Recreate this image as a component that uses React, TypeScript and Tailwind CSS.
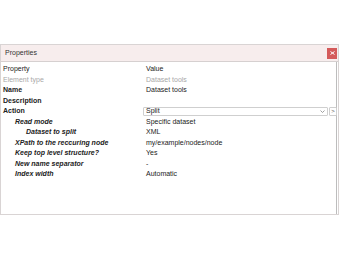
import React from 'react'

type Row = {
    label: string;
    value?: string;
    indent?: number;
    kind?: 'plain' | 'muted' | 'bold' | 'sub';
    select?: boolean;
}

const rows: Row[] = [
    { label: 'Property', value: 'Value', kind: 'plain' },
    { label: 'Element type', value: 'Dataset tools', kind: 'muted' },
    { label: 'Name', value: 'Dataset tools', kind: 'bold' },
    { label: 'Description', value: '', kind: 'bold' },
    { label: 'Action', value: 'Split', kind: 'bold', select: true },
    { label: 'Read mode', value: 'Specific dataset', kind: 'sub', indent: 1 },
    { label: 'Dataset to split', value: 'XML', kind: 'sub', indent: 2 },
    { label: 'XPath to the reccuring node', value: 'my/example/nodes/node', kind: 'sub', indent: 1 },
    { label: 'Keep top level structure?', value: 'Yes', kind: 'sub', indent: 1 },
    { label: 'New name separator', value: '-', kind: 'sub', indent: 1 },
    { label: 'Index width', value: 'Automatic', kind: 'sub', indent: 1 },
]

const App = () => {
    return (
        <div className="w-[340px] h-[260px] bg-white pt-[44px] font-['Liberation_Sans',Arial,sans-serif] text-[7px] text-[#222]">
            <div className="w-[339px] h-[171px] border border-[#d9d4d4] flex flex-col">
                <div className="h-[17px] bg-[#f7eded] border-b border-[#d6d0d0] flex items-center justify-between pl-[4px] pr-[1px]">
                    <span className="text-[#333]">Properties</span>
                    <div className="w-[10px] h-[11px] bg-[#d45a5a] flex items-center justify-center">
                        <svg width="5" height="4" viewBox="0 0 5 4">
                            <path d="M0.5 0.5 L4.5 3.5 M4.5 0.5 L0.5 3.5" stroke="#fff" strokeWidth="1" />
                        </svg>
                    </div>
                </div>
                <div className="flex-1 pt-[2px] border-r border-[#bdbdbd] mr-[1px]">
                    {rows.map((r) => (
                        <div key={r.label} className="h-[10.5px] flex items-center">
                            <div
                                className={
                                    'w-[142px] shrink-0 pl-[2px] ' +
                                    (r.kind === 'muted' ? 'text-[#a8a8a8] ' : '') +
                                    (r.kind === 'bold' ? 'font-bold ' : '') +
                                    (r.kind === 'sub' ? 'font-bold italic ' : '') +
                                    (r.indent === 1 ? 'pl-[14px] ' : '') +
                                    (r.indent === 2 ? 'pl-[25px] ' : '')
                                }
                            >
                                {r.label}
                            </div>
                            {r.select ? (
                                <div className="flex items-center gap-[1px]">
                                    <div className="w-[185px] h-[9px] border border-[#cfcfcf] rounded-[1px] flex items-center justify-between pl-[2px] pr-[2px]">
                                        <span>Split</span>
                                        <svg width="5" height="3" viewBox="0 0 5 3">
                                            <path d="M0.5 0.5 L2.5 2.5 L4.5 0.5" stroke="#888" strokeWidth="0.8" fill="none" />
                                        </svg>
                                    </div>
                                    <div className="w-[8px] h-[9px] border border-[#cfcfcf] rounded-[1px] flex items-center justify-center text-[6px] leading-none text-[#555]">
                                        &gt;
                                    </div>
                                </div>
                            ) : (
                                <div className={'pl-[3px] ' + (r.kind === 'muted' ? 'text-[#a8a8a8]' : '')}>{r.value}</div>
                            )}
                        </div>
                    ))}
                </div>
            </div>
        </div>
    )
}

export default App
